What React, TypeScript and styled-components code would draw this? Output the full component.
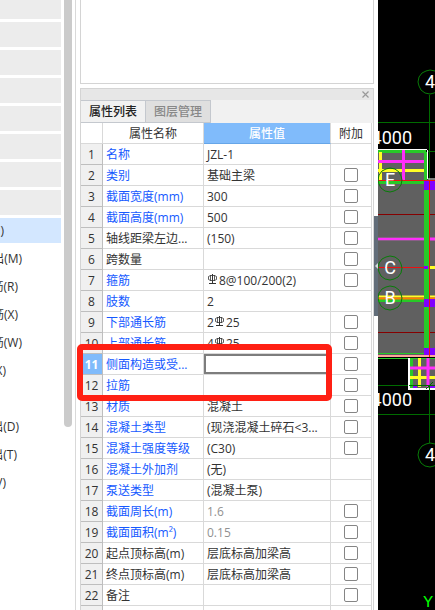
import React from "react";
import styled, { createGlobalStyle } from "styled-components";

const GlobalStyle = createGlobalStyle`
  * { box-sizing: border-box; }
  body {
    margin: 0;
    background: #fff;
    color: #333;
    font: 12px/20px "Open Sans", "Noto Sans CJK SC", sans-serif;
  }
  button, input { font: inherit; color: inherit; }
`;

const Page = styled.div`
  display: flex;
  height: 100vh;
  overflow: hidden;
`;

const Sidebar = styled.nav`
  display: flex;
  flex: none;
  gap: 3px;
  width: 76px;
  border-right: 1px solid #d9d9d9;
`;

const ToolList = styled.div`
  flex: none;
  display: flex;
  flex-direction: column;
  gap: 3px;
  width: 61px;
  overflow: hidden;
`;

const ToolGroup = styled.button<{ $first?: boolean }>`
  flex: none;
  height: ${(p) => (p.$first ? 19 : 25)}px;
  padding: 0;
  border: 0;
  background: #ececec;
`;

const ToolItem = styled.button<{ $selected?: boolean }>`
  flex: none;
  display: flex;
  height: 25px;
  padding: 0;
  border: 0;
  background: ${(p) => (p.$selected ? "#d3e7ff" : "transparent")};
`;

const ToolLabel = styled.span<{ $end: number }>`
  display: flex;
  justify-content: flex-end;
  width: ${(p) => p.$end}px;
  line-height: 25px;
  white-space: nowrap;
`;

const ScrollThumb = styled.div`
  width: 8px;
  height: 427px;
  border-radius: 0 0 4px 4px;
  background: #cbcbcb;
`;

const Middle = styled.main`
  flex: none;
  display: flex;
  flex-direction: column;
  gap: 4px;
  width: 298px;
  padding-left: 4px;
`;

const Preview = styled.section`
  flex: none;
  height: 84px;
  border: 1px solid #d4d4d4;
  border-top: 0;
`;

const Panel = styled.section`
  flex: none;
  border: 1px solid #d4d4d4;
`;

const PanelBar = styled.header`
  display: flex;
  justify-content: flex-end;
  height: 11px;
  padding-right: 3px;
  background: #e7e7e7;
`;

const CloseButton = styled.button`
  display: flex;
  align-items: center;
  padding: 0;
  border: 0;
  background: none;
`;

const TabBar = styled.div`
  display: flex;
  height: 23px;
  background: #f1f1f1;
`;

const Tab = styled.button<{ $active?: boolean }>`
  width: 65px;
  padding: 0;
  border: 1px solid #c4c8ce;
  border-left: 0;
  background: ${(p) => (p.$active ? "#f1f1f1" : "#dfdfdf")};
  color: ${(p) => (p.$active ? "#222" : "#888")};
  font-weight: 500;
  line-height: 20px;
`;

const TableArea = styled.div`
  position: relative;
`;

const Table = styled.table`
  width: 291px;
  table-layout: fixed;
  border-collapse: separate;
  border-spacing: 0;
  line-height: 18px;
`;

const NumberCol = styled.col`
  width: 22px;
`;
const NameCol = styled.col`
  width: 101px;
`;
const ValueCol = styled.col`
  width: 127px;
`;

const HeadCell = styled.th<{ $active?: boolean }>`
  height: 21px;
  padding: 2px 0 0;
  border-right: 1px solid #d9d9d9;
  border-bottom: 1px solid ${(p) => (p.$active ? "#66a6e8" : "#d9d9d9")};
  background: ${(p) => (p.$active ? "#80bbfb" : "#fff")};
  color: ${(p) => (p.$active ? "#fff" : "#333")};
  font-weight: ${(p) => (p.$active ? 500 : 400)};
`;

const NumberCell = styled.th<{ $active?: boolean }>`
  height: 21px;
  padding: 2px 0 0;
  border-right: 1px solid #bebebe;
  border-bottom: 1px solid #bebebe;
  background: ${(p) => (p.$active ? "#80bbfb" : "#f0f0f0")};
  color: ${(p) => (p.$active ? "#fff" : "#333")};
  font-weight: ${(p) => (p.$active ? 700 : 400)};
`;

const Cell = styled.td<{ $tone?: "blue" | "gray" }>`
  height: 21px;
  padding: 2px 0 0 3px;
  border-right: 1px solid #d9d9d9;
  border-bottom: 1px solid #d9d9d9;
  color: ${(p) => (p.$tone === "blue" ? "#1559ff" : p.$tone === "gray" ? "#919191" : "#333")};
  white-space: nowrap;
`;

const EditCell = styled(Cell)`
  padding: 0;
`;

const ValueInput = styled.input`
  display: block;
  width: 100%;
  height: 20px;
  padding: 0 2px;
  border: 2px solid #7d7d7d;
  outline: 0;
  background: #fff;
`;

const CheckCell = styled(Cell)`
  padding: 0;
`;

const Check = styled.input`
  appearance: none;
  display: block;
  width: 14px;
  height: 14px;
  margin: 0 auto;
  border: 1px solid #858585;
  border-radius: 2px;
  background: #fff;
`;

const ExpandButton = styled.button`
  display: block;
  width: 10px;
  height: 12px;
  padding: 0;
  border: 1px solid #888;
  background: #fff;
  line-height: 8px;
`;

const RebarSvg = styled.svg`
  display: inline-block;
  width: 11px;
  height: 12px;
  margin: 0 1px 0 0;
  vertical-align: -1px;
`;

const Highlight = styled.div`
  position: absolute;
  left: -4px;
  right: 41px;
  top: 221px;
  height: 57px;
  border: 6px solid #ff2014;
  border-radius: 5px;
  pointer-events: none;
`;

const Splitter = styled.div`
  flex: none;
  display: flex;
  align-items: flex-start;
  width: 4px;
  padding-top: 216px;
`;

const CollapseButton = styled.button`
  display: flex;
  align-items: center;
  width: 4px;
  height: 100px;
  padding: 0;
  border: 0;
  background: #626d79;
`;

const Canvas = styled.section`
  flex: 1;
  min-width: 0;
  overflow: hidden;
  background: #000;
`;

const Drawing = styled.svg`
  display: block;
  font-family: Roboto, sans-serif;
`;

const Rebar = () => (
  <RebarSvg viewBox="0 0 11 12" fill="none" stroke="#333" aria-label="HRB400">
    <path d="M5.5 0V10M2 9.5H9" />
    <path d="M3.5 1V7M7.5 1V7M1.5 2.5V5.5M9.5 2.5V5.5M1.5 2.5L3.5 1.5H7.5L9.5 2.5M1.5 5.5L3.5 6.5H7.5L9.5 5.5" strokeWidth="0.8" />
  </RebarSvg>
);

type Row = {
  name: string;
  value?: React.ReactNode;
  plain?: boolean;
  muted?: boolean;
  noCheck?: boolean;
};

const rows: Row[] = [
  { name: "名称", value: "JZL-1", noCheck: true },
  { name: "类别", value: "基础主梁" },
  { name: "截面宽度(mm)", value: "300" },
  { name: "截面高度(mm)", value: "500" },
  { name: "轴线距梁左边...", value: "(150)", plain: true },
  { name: "跨数量", plain: true },
  { name: "箍筋", value: <><Rebar />8@100/200(2)</> },
  { name: "肢数", value: "2", noCheck: true },
  { name: "下部通长筋", value: <>2<Rebar />25</> },
  { name: "上部通长筋", value: <>4<Rebar />25</> },
  { name: "侧面构造或受..." },
  { name: "拉筋" },
  { name: "材质", value: "混凝土" },
  { name: "混凝土类型", value: "(现浇混凝土碎石<3..." },
  { name: "混凝土强度等级", value: "(C30)" },
  { name: "混凝土外加剂", value: "(无)", noCheck: true },
  { name: "泵送类型", value: "(混凝土泵)", noCheck: true },
  { name: "截面周长(m)", value: "1.6", muted: true },
  { name: "截面面积(m²)", value: "0.15", muted: true },
  { name: "起点顶标高(m)", value: "层底标高加梁高", plain: true },
  { name: "终点顶标高(m)", value: "层底标高加梁高", plain: true },
  { name: "备注", plain: true },
];

const selectedRow = 11;

const tools = [
  { label: ")", end: 4, selected: true },
  { label: "出(M)", end: 22 },
  { label: "筋(R)", end: 18 },
  { label: "筋(X)", end: 18 },
  { label: "筋(W)", end: 22 },
  { label: "X)", end: 6 },
  { label: "", end: 0 },
  { label: "出(D)", end: 19 },
  { label: "出(T)", end: 17 },
  { label: "V)", end: 6 },
];

const AxisBubble = ({ x, y, label }: { x: number; y: number; label: string }) => (
  <g>
    <path
      transform={`translate(${x} ${y})`}
      d="M0-12L5-11L9-8L11-4L12 0L11 5L8 9L4 11L0 12L-5 11L-9 8L-11 4L-12 0L-11-5L-8-9L-4-11Z"
      fill="none"
      stroke="#087c08"
    />
    <text x={x} y={y + 6} textAnchor="middle" fontSize="18" fill="#fff">
      {label}
    </text>
  </g>
);

const Plan = () => (
  <Drawing width="57" height="610" viewBox="0 0 57 610" role="img" aria-label="基础梁平面图">
    <path fill="#606060" d="M0 152H49V180H57V356H0ZM31 358H57V388H31Z" />
    <g fill="none" stroke="#006b00">
      <path d="M0 122.5H57M49 151.5H57M51.5 95V180M0 385.5H31M0 414.5H57M51.5 388V443" />
    </g>
    <g fill="none">
      <path d="M0 149.5H49" stroke="#fff" />
      <path d="M0 151.5H48M0 182.5H46" stroke="#27c927" strokeWidth="3" />
      <path d="M2.5 152V180M0 170.5H48" stroke="#ffff25" strokeWidth="3" />
      <path d="M25.5 150V180M0 161.5H49" stroke="#ff2dfa" strokeWidth="3" />
      <path d="M47.5 152V180" stroke="#27c927" strokeWidth="3" />
      <path d="M49.5 150V179H57" stroke="#fff" />
      <path d="M0 237.5H46M0 240.5H46" stroke="#188e18" />
      <path d="M0 239H57" stroke="#ff2dfa" strokeWidth="3" />
      <path d="M0 300.5H46" stroke="#27c927" strokeWidth="3" />
      <path d="M0 296.5H57" stroke="#ffff25" strokeWidth="2" />
      <path d="M0 298.5H57" stroke="#ff7c00" strokeWidth="2" />
      <path d="M0 214.5H57M0 332.5H57" stroke="#860000" />
      <path d="M48.5 183V356" stroke="#27c927" strokeWidth="5" />
      <path d="M0 353.5H57M0 358.5H57" stroke="#27c927" />
      <path d="M0 356H57" stroke="#ffa39a" strokeWidth="2" />
    </g>
    <path fill="#8000ff" d="M46 180H57V190H46ZM46 266H50V269H46ZM46 299H57V307H46ZM46 348H57V355H46ZM34 386H39V388H34ZM51 386H57V388H51Z" />
    <path fill="#ffff25" d="M52 266H57V269H52Z" />
    <g fill="none">
      <path d="M33.5 358V388" stroke="#27c927" strokeWidth="3" />
      <path d="M41.5 358V387M31 377.5H57" stroke="#ffff25" strokeWidth="3" />
      <path d="M50 358V387M31 368H57" stroke="#ff2dfa" strokeWidth="3" />
      <path d="M31 358V389H57" stroke="#fff" strokeWidth="2" />
      <path d="M31 385.5H57M48 389L55 382M51.5 385V443" stroke="#006b00" />
      <path d="M0 180.5H57M0 267.5H46M51.5 180V357" stroke="#ed1010" />
    </g>
    <g fill="#fff" fontSize="18" textAnchor="end">
      <text x="34" y="144">4000</text>
      <text x="34" y="406">4000</text>
    </g>
    <AxisBubble x={52} y={82} label="4" />
    <AxisBubble x={12} y={180} label="E" />
    <AxisBubble x={12} y={268} label="C" />
    <AxisBubble x={12} y={298} label="B" />
    <AxisBubble x={52} y={455} label="4" />
    <text x="50" y="607" textAnchor="middle" fontFamily="Liberation Mono" fontSize="17" fill="#00ff00">Y</text>
  </Drawing>
);

export default function App() {
  return (
    <>
      <GlobalStyle />
      <Page>
        <Sidebar>
          <ToolList>
            {Array.from({ length: 8 }, (_, i) => (
              <ToolGroup key={i} $first={i === 0} aria-label={`分组 ${i + 1}`} />
            ))}
            {tools.map((t, i) => (
              <ToolItem key={i} $selected={t.selected}>
                <ToolLabel $end={t.end}>{t.label}</ToolLabel>
              </ToolItem>
            ))}
          </ToolList>
          <ScrollThumb />
        </Sidebar>
        <Middle>
          <Preview />
          <Panel>
            <PanelBar>
              <CloseButton aria-label="关闭">
                <svg width="9" height="9" viewBox="0 0 9 9" stroke="#999" fill="none">
                  <path d="M1.5 1.5L7.5 7.5M7.5 1.5L1.5 7.5" strokeWidth="1.2" />
                </svg>
              </CloseButton>
            </PanelBar>
            <TabBar role="tablist">
              <Tab role="tab" aria-selected $active>属性列表</Tab>
              <Tab role="tab" aria-selected={false}>图层管理</Tab>
            </TabBar>
            <TableArea>
              <Table>
                <colgroup>
                  <NumberCol />
                  <NameCol />
                  <ValueCol />
                  <col />
                </colgroup>
                <thead>
                  <tr>
                    <HeadCell />
                    <HeadCell>属性名称</HeadCell>
                    <HeadCell $active>属性值</HeadCell>
                    <HeadCell>附加</HeadCell>
                  </tr>
                </thead>
                <tbody>
                  {rows.map((r, i) => (
                    <tr key={r.name}>
                      <NumberCell scope="row" $active={i + 1 === selectedRow}>{i + 1}</NumberCell>
                      <Cell $tone={r.plain ? undefined : "blue"}>{r.name}</Cell>
                      {i + 1 === selectedRow ? (
                        <EditCell>
                          <ValueInput type="text" aria-label={r.name} />
                        </EditCell>
                      ) : (
                        <Cell $tone={r.muted ? "gray" : undefined}>{r.value}</Cell>
                      )}
                      <CheckCell>
                        {!r.noCheck && <Check type="checkbox" aria-label={`附加 ${r.name}`} />}
                      </CheckCell>
                    </tr>
                  ))}
                  <tr>
                    <NumberCell scope="row">23</NumberCell>
                    <Cell><ExpandButton aria-label="展开">+</ExpandButton></Cell>
                    <Cell />
                    <CheckCell />
                  </tr>
                </tbody>
              </Table>
              <Highlight />
            </TableArea>
          </Panel>
        </Middle>
        <Splitter>
          <CollapseButton aria-label="收起面板">
            <svg width="4" height="6" viewBox="0 0 4 6" fill="#d5d9dd">
              <path d="M4 0V6L1 3Z" />
            </svg>
          </CollapseButton>
        </Splitter>
        <Canvas>
          <Plan />
        </Canvas>
      </Page>
    </>
  );
}
